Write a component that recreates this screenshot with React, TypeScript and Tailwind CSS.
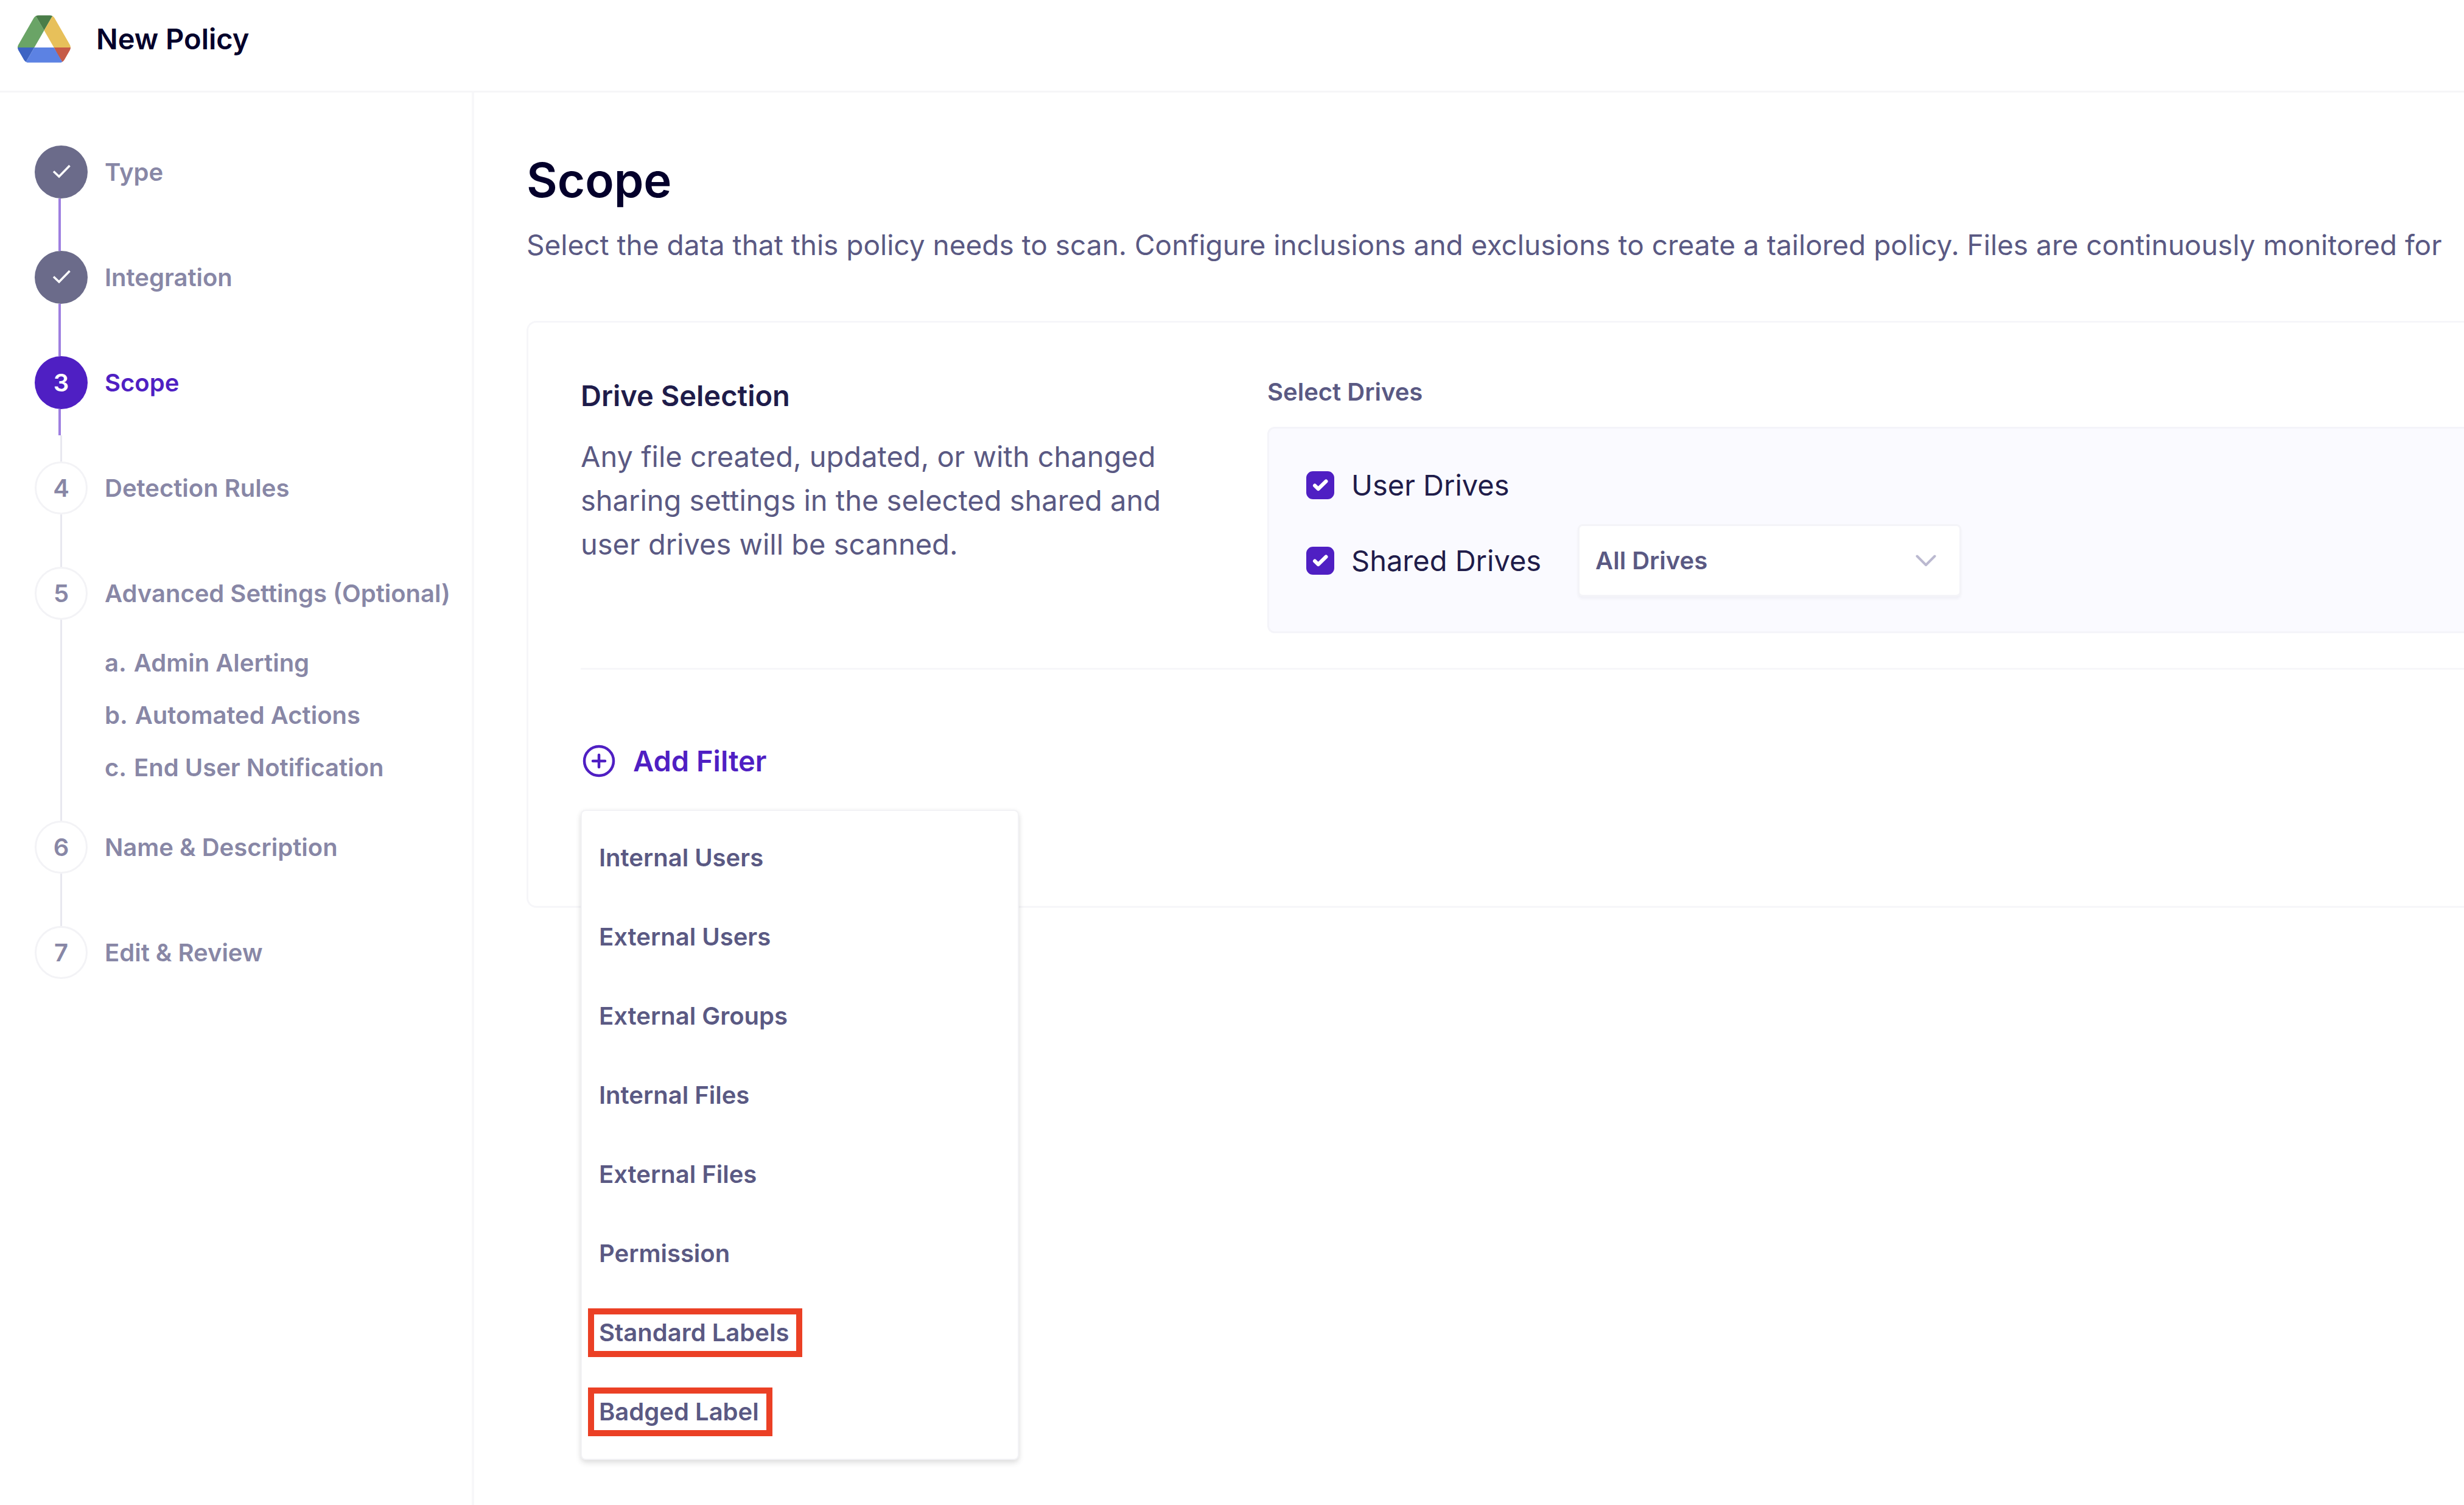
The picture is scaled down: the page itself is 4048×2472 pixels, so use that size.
import React from "react";

type StepState = "done" | "current" | "upcoming";
type LineKind = "done" | "half" | "upcoming" | "none";

interface Step {
  n: number;
  label: string;
  state: StepState;
  line: LineKind;
  children?: { key: string; label: string }[];
}

const steps: Step[] = [
  { n: 1, label: "Type", state: "done", line: "done" },
  { n: 2, label: "Integration", state: "done", line: "done" },
  { n: 3, label: "Scope", state: "current", line: "half" },
  { n: 4, label: "Detection Rules", state: "upcoming", line: "upcoming" },
  {
    n: 5,
    label: "Advanced Settings (Optional)",
    state: "upcoming",
    line: "upcoming",
    children: [
      { key: "a.", label: "Admin Alerting" },
      { key: "b.", label: "Automated Actions" },
      { key: "c.", label: "End User Notification" },
    ],
  },
  { n: 6, label: "Name & Description", state: "upcoming", line: "upcoming" },
  { n: 7, label: "Edit & Review", state: "upcoming", line: "none" },
];

const filters = [
  { label: "Internal Users", marked: false },
  { label: "External Users", marked: false },
  { label: "External Groups", marked: false },
  { label: "Internal Files", marked: false },
  { label: "External Files", marked: false },
  { label: "Permission", marked: false },
  { label: "Standard Labels", marked: true },
  { label: "Badged Label", marked: true },
];

function DriveLogo() {
  return (
    <svg viewBox="0 0 87.3 78" className="h-[78px] w-[87px]" aria-hidden="true">
      <path fill="#3c63c3" d="m6.6 66.85 3.85 6.65c.8 1.4 1.95 2.5 3.3 3.3l13.75-23.8h-27.5c0 1.55.4 3.1 1.2 4.5z" />
      <path fill="#6aa466" d="m43.65 25-13.75-23.8c-1.35.8-2.5 1.9-3.3 3.3l-25.4 44a9.06 9.06 0 0 0 -1.2 4.5h27.5z" />
      <path fill="#c65b47" d="m73.55 76.8c1.35-.8 2.5-1.9 3.3-3.3l1.6-2.75 7.65-13.25c.8-1.4 1.2-2.95 1.2-4.5h-27.502l5.852 11.5z" />
      <path fill="#4a7d48" d="m43.65 25 13.75-23.8c-1.35-.8-2.9-1.2-4.5-1.2h-18.5c-1.6 0-3.15.45-4.5 1.2z" />
      <path fill="#5c82e3" d="m59.8 53h-32.3l-13.75 23.8c1.35.8 2.9 1.2 4.5 1.2h50.8c1.6 0 3.15-.45 4.5-1.2z" />
      <path fill="#e7c05a" d="m73.4 26.5-12.7-22c-.8-1.4-1.95-2.5-3.3-3.3l-13.75 23.8 16.15 28h27.45c0-1.55-.4-3.1-1.2-4.5z" />
    </svg>
  );
}

const circleStyle: Record<StepState, string> = {
  done: "bg-[#6b6b8a]",
  current: "bg-[#4f1fc3] text-white",
  upcoming: "border-3 border-[#f3f3f6] bg-white text-[#8887a6]",
};

function StepItem({ step }: { step: Step }) {
  return (
    <li>
      <a
        href={`#step-${step.n}`}
        aria-current={step.state === "current" ? "step" : undefined}
        className="flex items-center gap-7 font-semibold"
      >
        <span
          className={`flex size-[87px] shrink-0 items-center justify-center rounded-full ${circleStyle[step.state]}`}
        >
          {step.state === "done" ? (
            <svg viewBox="0 0 87 87" className="size-full" fill="none" aria-hidden="true">
              <path d="M31 42.5 40 51 57.5 33" stroke="#fff" strokeWidth="3.5" />
            </svg>
          ) : (
            step.n
          )}
        </span>
        <span
          className={
            step.state === "current" ? "whitespace-nowrap text-[#4f1fc3]" : "whitespace-nowrap text-[#8887a6]"
          }
        >
          {step.label}
        </span>
      </a>
      {step.line !== "none" && (
        <div className={step.children ? "flex h-[330px]" : "flex h-[86px]"}>
          <div className="flex w-[87px] shrink-0 flex-col">
            {(step.line === "done" || step.line === "half") && (
              <div className="ml-[39px] w-1 flex-1 bg-[#9e7fe0]" />
            )}
            {(step.line === "upcoming" || step.line === "half") && (
              <div className="ml-[42px] w-[3px] flex-1 bg-[#e8e8ef]" />
            )}
          </div>
          {step.children && (
            <ol className="pt-7 pl-7">
              {step.children.map((c) => (
                <li
                  key={c.key}
                  className="flex h-[86px] items-center gap-3 font-semibold whitespace-nowrap text-[#8887a6]"
                >
                  <span>{c.key}</span>
                  <a href={`#step-${step.n}`}>{c.label}</a>
                </li>
              ))}
            </ol>
          )}
        </div>
      )}
    </li>
  );
}

function CheckField({ id, label }: { id: string; label: string }) {
  return (
    <div className="flex items-center gap-7">
      <span className="grid size-[46px] shrink-0">
        <input
          id={id}
          type="checkbox"
          defaultChecked
          className="peer col-start-1 row-start-1 size-[46px] appearance-none rounded-[11px] border-3 border-[#4f1fc3] bg-white checked:bg-[#4f1fc3]"
        />
        <svg
          viewBox="0 0 46 46"
          fill="none"
          aria-hidden="true"
          className="pointer-events-none col-start-1 row-start-1 size-[46px] opacity-0 peer-checked:opacity-100"
        >
          <path d="M14 23.5 19.7 29 32.5 16.5" stroke="#fff" strokeWidth="6" strokeLinecap="round" strokeLinejoin="round" />
        </svg>
      </span>
      <label htmlFor={id} className="text-[47px] leading-[72px] whitespace-nowrap text-[#1f1c4a]">
        {label}
      </label>
    </div>
  );
}

export default function App() {
  return (
    <div className="flex min-h-screen flex-col overflow-hidden bg-white font-['Inter',sans-serif] text-[40px] leading-[60px]">
      <header className="flex h-[152px] items-start border-b-3 border-[#f6f6f8] px-[29px] pt-[25px]">
        <div className="flex items-center gap-[42px]">
          <DriveLogo />
          <span className="text-[47px] font-semibold text-[#04002b]">New Policy</span>
        </div>
      </header>

      <div className="flex flex-1">
        <nav aria-label="Policy steps" className="w-[779px] shrink-0 border-r-4 border-[#f7f7f9] pt-[87px] pl-[57px]">
          <ol>
            {steps.map((s) => (
              <StepItem key={s.n} step={s} />
            ))}
          </ol>
        </nav>

        <main className="min-w-0 flex-1 pt-24 pl-[86px]">
          <h1 className="text-[78px] leading-[96px] font-semibold text-[#04002b]">Scope</h1>
          <p className="mt-[22px] overflow-hidden text-[46px] leading-[72px] whitespace-nowrap text-[#5a5983]">
            Select the data that this policy needs to scan. Configure inclusions and exclusions to create a tailored
            policy. Files are continuously monitored for
          </p>

          <div className="mt-[89px] rounded-l-2xl border-3 border-r-0 border-[#f6f6f9] pb-[202px] pl-[86px]">
            <section className="grid grid-cols-[1128px_1fr] border-b-3 border-[#f6f6f9] pt-[84px] pb-[57px]">
              <div>
                <h2 className="text-[47px] leading-[72px] font-semibold text-[#1f1c4a]">Drive Selection</h2>
                <p className="mt-7 max-w-[980px] text-[47px] leading-[72px] text-[#5a5983]">
                  Any file created, updated, or with changed sharing settings in the selected shared and user drives
                  will be scanned.
                </p>
              </div>
              <fieldset className="min-w-0">
                <legend className="font-semibold text-[#5a5983]">Select Drives</legend>
                <div className="mt-[27px] flex flex-col gap-7 rounded-l-xl border-3 border-r-0 border-[#f4f4f9] bg-[#fafaff] px-[61px] py-[57px]">
                  <CheckField id="user-drives" label="User Drives" />
                  <div className="flex items-center gap-[60px]">
                    <CheckField id="shared-drives" label="Shared Drives" />
                    <div className="grid w-[630px] items-center">
                      <select
                        aria-label="Shared drives to scan"
                        className="col-start-1 row-start-1 h-[119px] w-full appearance-none rounded-lg border-3 border-[#f4f4f8] bg-white pr-24 pl-[26px] font-semibold text-[#5a5983] shadow-[0_4px_4px_rgba(20,20,60,0.04)]"
                      >
                        <option>All Drives</option>
                      </select>
                      <svg
                        viewBox="0 0 34 20"
                        fill="none"
                        aria-hidden="true"
                        className="pointer-events-none col-start-1 row-start-1 mr-[41px] h-5 w-[34px] justify-self-end"
                      >
                        <path d="M2.5 2.5 17 17 31.5 2.5" stroke="#bbb9d0" strokeWidth="4" strokeLinecap="round" strokeLinejoin="round" />
                      </svg>
                    </div>
                  </div>
                </div>
              </fieldset>
            </section>

            <div className="relative mt-[114px] w-[720px]">
              <button
                type="button"
                aria-expanded="true"
                aria-haspopup="menu"
                className="flex h-[72px] items-center gap-[26px] text-[47px] font-semibold text-[#4f1fc3]"
              >
                <svg viewBox="0 0 60 60" fill="none" stroke="#4f1fc3" className="size-[60px]" aria-hidden="true">
                  <circle cx="30" cy="30" r="24" strokeWidth="4.5" />
                  <path d="M30 20v20M20 30h20" strokeWidth="4.5" strokeLinecap="round" />
                </svg>
                Add Filter
              </button>
              <div
                role="menu"
                className="absolute top-full left-0 z-10 mt-[44px] w-full rounded-lg border-2 border-[#f2f2f5] bg-white py-3 shadow-[0_5px_10px_rgba(0,0,0,0.12),0_0_10px_rgba(0,0,0,0.03)]"
              >
                {filters.map((f) => (
                  <button
                    key={f.label}
                    type="button"
                    role="menuitem"
                    className="flex h-[130px] w-full items-center px-7 font-semibold text-[#5a5983]"
                  >
                    {f.marked ? (
                      <span className="-ml-[18px] flex h-20 items-center border-10 border-[#eb4025] pr-3 pl-2">
                        {f.label}
                      </span>
                    ) : (
                      f.label
                    )}
                  </button>
                ))}
              </div>
            </div>
          </div>
        </main>
      </div>
    </div>
  );
}
